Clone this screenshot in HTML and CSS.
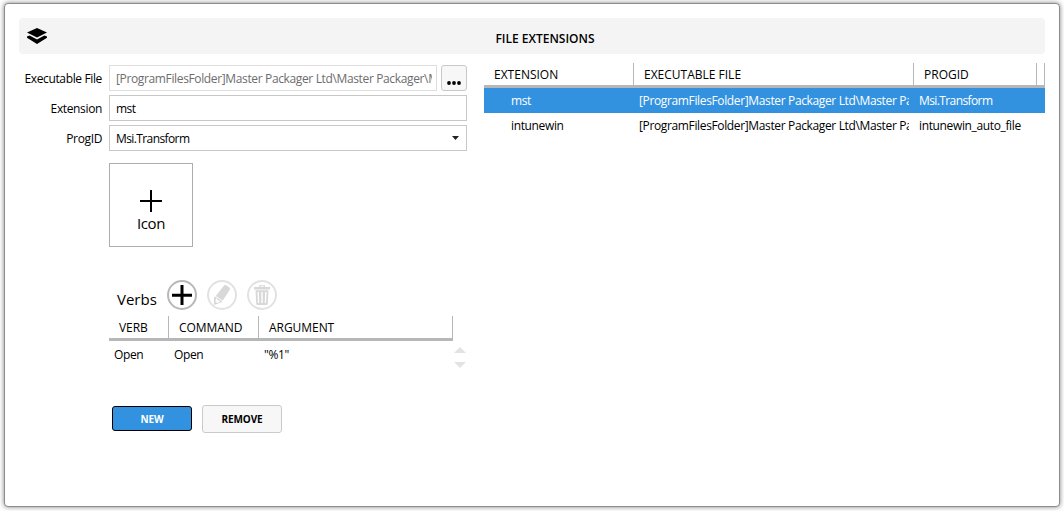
FILE: index.html
```html
<!DOCTYPE html>
<html lang="en">
  <head>
    <meta charset="UTF-8">
    <title>File Extensions</title>
    <link rel="stylesheet" href="styles.css">
  </head>
  <body>
    <div class="window">
      <header class="title-bar">
        <svg class="layers-icon" viewBox="0 0 20 16" width="20" height="16">
          <path d="M10 0 L20 4.6 L10 9.6 L0 4.6 Z" />
          <path d="M0 8.6 L2.6 7.4 L10 11.4 L17.4 7.4 L20 8.6 V9.8 L10 16 L0 9.8 Z" />
        </svg>
        <h1 class="title">FILE EXTENSIONS</h1>
      </header>

      <main class="content">
        <section class="form">
          <div class="form-row">
            <label class="form-label">Executable File</label>
            <div class="field field-disabled"><span>[ProgramFilesFolder]Master Packager Ltd\Master Packager\M</span></div>
            <button class="browse-button" aria-label="Browse">
              <svg viewBox="0 0 14 4" width="14" height="4">
                <circle cx="2" cy="2" r="1.9" />
                <circle cx="7" cy="2" r="1.9" />
                <circle cx="12" cy="2" r="1.9" />
              </svg>
            </button>
          </div>
          <div class="form-row">
            <label class="form-label">Extension</label>
            <div class="field narrow">mst</div>
          </div>
          <div class="form-row">
            <label class="form-label">ProgID</label>
            <div class="field select">
              <span class="narrow">Msi.Transform</span>
              <svg viewBox="0 0 7 4" width="7" height="4"><path d="M0 0 H7 L3.5 4 Z" /></svg>
            </div>
          </div>

          <div class="icon-box">
            <svg viewBox="0 0 22 22" width="22" height="22"><path d="M10 0 H12 V10 H22 V12 H12 V22 H10 V12 H0 V10 H10 Z" /></svg>
            <span>Icon</span>
          </div>

          <div class="verbs-bar">
            <h2 class="verbs-title">Verbs</h2>
            <button class="round-button" aria-label="Add verb">
              <svg viewBox="0 0 30 30" width="30" height="30">
                <circle class="ring" cx="15" cy="15" r="14" />
                <path d="M13.5 5 H16.5 V13.7 H25 V16.7 H16.5 V25 H13.5 V16.7 H5 V13.7 H13.5 Z" />
              </svg>
            </button>
            <button class="round-button disabled" aria-label="Edit verb">
              <svg viewBox="0 0 30 30" width="30" height="30">
                <circle class="ring" cx="15" cy="15" r="14" />
                <path d="M16.8 5.8 Q17.8 4.5 19.2 5.3 L22.4 7.5 Q23.6 8.4 22.8 9.8 L15.8 20.4 L8.8 16 Z" />
                <path fill-rule="evenodd" d="M8 16.4 L15.2 21 L14.6 22.2 L7 25 V17.5 Z M8.9 18.2 L8.5 21.8 L10.2 23 L13.2 21.8 L12.4 20.6 L10.8 20.6 L10.2 19 Z" />
              </svg>
            </button>
            <button class="round-button disabled" aria-label="Delete verb">
              <svg viewBox="0 0 30 30" width="30" height="30">
                <circle class="ring" cx="15" cy="15" r="14" />
                <path fill-rule="evenodd" d="M7 7 H12 V5.2 H18 V7 H23 V9.5 H7 Z M13.2 6.3 V7 H16.8 V6.3 Z" />
                <path fill-rule="evenodd" d="M8.5 10.3 H21.5 L20.8 23.5 Q20.7 25 19.5 25 H10.5 Q9.3 25 9.2 23.5 Z M10.4 12 L11 23 H12.2 L11.9 12 Z M14.3 12 V23 H15.7 V12 Z M18.1 12 L17.8 23 H19 L19.6 12 Z" />
              </svg>
            </button>
          </div>

          <div class="verbs">
            <div class="verbs-table">
              <div class="table-head">
                <span>VERB</span><span>COMMAND</span><span>ARGUMENT</span>
              </div>
              <div class="table-row">
                <span>Open</span><span>Open</span><span>"%1"</span>
              </div>
            </div>
            <div class="scroll-arrows">
              <svg viewBox="0 0 12 6" width="12" height="6"><path d="M0 6 L6 0 L12 6 Z" /></svg>
              <svg viewBox="0 0 12 6" width="12" height="6"><path d="M0 0 H12 L6 6 Z" /></svg>
            </div>
          </div>

          <div class="actions">
            <button class="action primary">NEW</button>
            <button class="action">REMOVE</button>
          </div>
        </section>

        <section class="extensions-table">
          <div class="table-head">
            <span>EXTENSION</span><span>EXECUTABLE FILE</span><span>PROGID</span><span class="filler"></span>
          </div>
          <div class="table-row selected">
            <span class="extension">mst</span><span class="path">[ProgramFilesFolder]Master Packager Ltd\Master Pac</span><span class="narrow">Msi.Transform</span>
          </div>
          <div class="table-row">
            <span class="extension">intunewin</span><span class="path">[ProgramFilesFolder]Master Packager Ltd\Master Pac</span><span>intunewin_auto_file</span>
          </div>
        </section>
      </main>
    </div>
  </body>
</html>
```
FILE: styles.css
```css
* {
  box-sizing: border-box;
}

body {
  margin: 0;
  padding: 3px 4px 4px;
  height: 511px;
  overflow: hidden;
  background: #fff;
  color: #000;
  font-family: "Open Sans", "Noto Sans", sans-serif;
  font-size: 12px;
  line-height: 16px;
  letter-spacing: -0.36px;
}

button {
  font: inherit;
  padding: 0;
  letter-spacing: inherit;
}

svg {
  display: block;
}

.window {
  height: 504px;
  padding: 14px 14px 0;
  border: 1px solid #8c8c8c;
  border-radius: 4px;
  background: #fff;
  box-shadow: 0 0 5px rgba(0, 0, 0, 0.5);
}

.title-bar {
  display: flex;
  align-items: center;
  height: 36px;
  padding-left: 8px;
  border-radius: 4px;
  background: #f4f4f4;
}

.title {
  flex: 1;
  margin: 6px 28px 0 0;
  padding-left: 26px;
  font-size: 12px;
  font-weight: 600;
  letter-spacing: 0;
  text-align: center;
}

.content {
  display: flex;
  justify-content: space-between;
}

/* left side */
.form {
  width: 448px;
  padding-top: 11px;
}

.form-row {
  display: flex;
  height: 26px;
  margin-bottom: 4px;
}

.form-label {
  width: 83px;
  margin-right: 7px;
  padding-top: 6px;
  text-align: right;
  white-space: nowrap;
}

.field {
  flex: 1;
  min-width: 0;
  height: 26px;
  padding: 5px 6px;
  border: 1px solid #c8c8c8;
  white-space: nowrap;
}

.field-disabled {
  padding-right: 4px;
  border-color: #dedede;
  color: #6d6d6d;
}

.field-disabled span {
  display: block;
  overflow: hidden;
}

.narrow {
  letter-spacing: -0.6px;
}

.select {
  display: flex;
  align-items: center;
  justify-content: space-between;
  padding: 0 7px 0 6px;
}

.select span {
  margin-top: 2px;
}

.select svg {
  fill: #222;
}

.browse-button {
  display: flex;
  justify-content: center;
  align-items: flex-end;
  width: 26px;
  margin-left: 4px;
  padding-bottom: 5px;
  border: 1px solid #c8c8c8;
  border-radius: 3px;
  background: #f7f7f7;
}

.icon-box {
  display: flex;
  flex-direction: column;
  align-items: center;
  width: 84px;
  height: 84px;
  margin: 12px 0 0 90px;
  padding-top: 26px;
  border: 1px solid #adadad;
  font-size: 15px;
  line-height: 20px;
}

.icon-box span {
  margin-top: 1px;
}

.verbs-bar {
  display: flex;
  gap: 10px;
  height: 30px;
  margin: 33px 0 0 98px;
}

.verbs-title {
  width: 40px;
  margin: 9px 0 0;
  font-size: 15px;
  font-weight: 500;
  line-height: 20px;
  letter-spacing: 0;
}

.round-button {
  width: 30px;
  height: 30px;
  border: none;
  background: none;
}

.ring {
  fill: none;
  stroke: #b8b8b8;
  stroke-width: 2;
}

.disabled svg {
  fill: #d8d8d8;
}

.disabled .ring {
  stroke: #e2e2e2;
}

.verbs {
  display: flex;
  height: 60px;
  margin: 6px 0 0 90px;
}

.table-head {
  display: grid;
  height: 25px;
  border-bottom: 3px solid #b7b7b7;
  font-weight: 500;
  letter-spacing: 0;
}

.table-head span {
  padding: 4px 0 0 10px;
  border-right: 1px solid #b7b7b7;
  white-space: nowrap;
}

.table-head .filler {
  padding: 0;
}

.table-row {
  display: grid;
  align-items: center;
  height: 25px;
}

.table-row span {
  overflow: hidden;
  white-space: nowrap;
}

.verbs-table {
  width: 344px;
}

.verbs-table .table-head,
.verbs-table .table-row {
  grid-template-columns: 60px 90px 194px;
}

.verbs-table .table-head {
  letter-spacing: -0.05px;
}

.verbs-table .table-row {
  height: 28px;
  padding-left: 5px;
}

.scroll-arrows {
  display: flex;
  flex-direction: column;
  gap: 9px;
  margin: 31px 0 0 1px;
}

.scroll-arrows svg {
  fill: #e3e3e3;
}

.actions {
  display: flex;
  align-items: flex-start;
  gap: 10px;
  margin: 29px 0 0 93px;
}

.action {
  width: 80px;
  height: 28px;
  border: 1px solid #cacaca;
  border-radius: 3px;
  background: #f7f7f7;
  font-size: 10px;
  font-weight: 700;
  line-height: 14px;
  letter-spacing: -0.1px;
}

.primary {
  height: 25px;
  margin-top: 1px;
  border-color: #000;
  background: #3392df;
  color: #fff;
}

/* right side */
.extensions-table {
  width: 561px;
  padding-top: 9px;
}

.extensions-table .table-head {
  grid-template-columns: 150px 280px 123px 8px;
}

.extensions-table .table-row {
  grid-template-columns: 150px 280px 126px;
  padding: 1px 0 0 5px;
}

.extensions-table .extension {
  padding-left: 22px;
}

.extensions-table .path {
  width: 270px;
}

.selected {
  background: #3392df;
  color: #fff;
}
```
